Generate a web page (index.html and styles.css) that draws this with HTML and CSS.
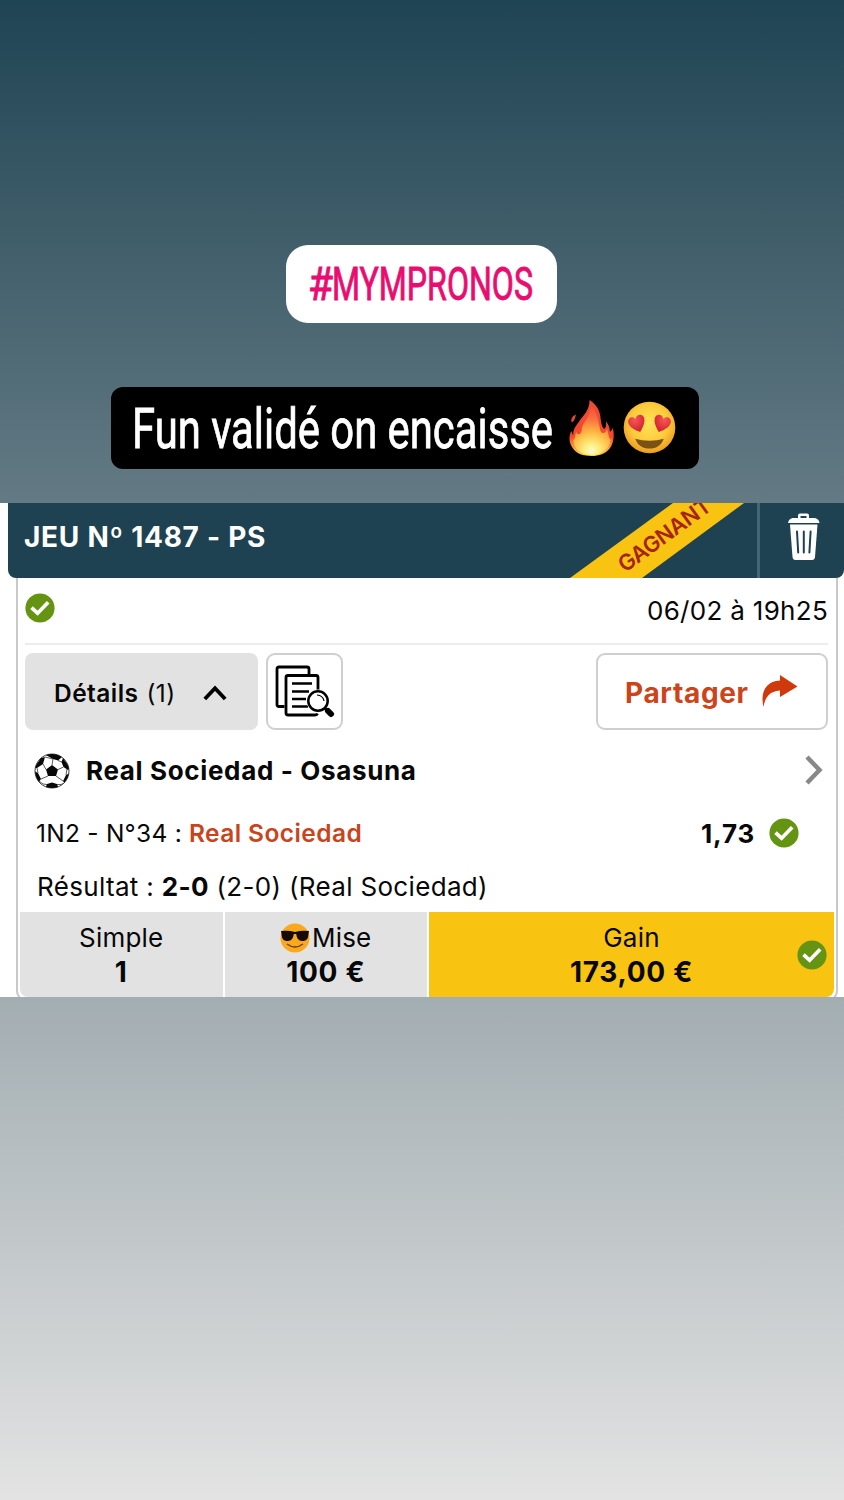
FILE: index.html
```html
<!DOCTYPE html>
<html lang="fr">
<head>
<meta charset="utf-8">
<title>Mympronos</title>
<link rel="stylesheet" href="styles.css">
</head>
<body>
<svg class="defs" aria-hidden="true">
  <defs>
    <symbol id="check" viewBox="0 0 30 30">
      <circle cx="15" cy="15" r="14.6" fill="#659413"/>
      <path d="M6.5 14.6 12.6 20.2 23.2 9.3" fill="none" stroke="#fff" stroke-width="3.7"/>
    </symbol>
  </defs>
</svg>
<main class="story">
  <div class="tag">
    <svg class="tag-text" viewBox="0 0 226 60"><text x="-1" y="46" textLength="25" lengthAdjust="spacingAndGlyphs">#</text><text x="23" y="46" textLength="201" lengthAdjust="spacingAndGlyphs">MYMPRONOS</text></svg>
  </div>
  <div class="caption">
    <svg class="caption-text" viewBox="0 0 420 76"><text x="-1" y="56" textLength="421" lengthAdjust="spacingAndGlyphs">Fun validé on encaisse</text></svg>
    <svg class="fire" viewBox="0 0 48 60">
      <defs>
        <radialGradient id="flame" gradientUnits="userSpaceOnUse" cx="24" cy="54" r="50">
          <stop offset="0" stop-color="#fffbd0"/><stop offset=".16" stop-color="#ffee7c"/>
          <stop offset=".4" stop-color="#ffb843"/><stop offset=".65" stop-color="#fa7440"/><stop offset="1" stop-color="#ee4336"/>
        </radialGradient>
        <linearGradient id="flameEdge" x1="0" y1="0" x2="0" y2="1"><stop offset="0" stop-color="#ef4b37"/><stop offset=".65" stop-color="#f3492b"/><stop offset="1" stop-color="#ffd94e"/></linearGradient>
      </defs>
      <path d="M22 1C27 4 32 10 33 17C34 23 34 28 37 31C40 29 39 25 39 23C42 27 43 30 43 34C45 33 45 32 46 30C48 37 47 46 43 51C38 57 32 59 24 59C16 59 8 57 4 50C0 43 1 38 3 33C4 35 4 36 5 37C5 30 9 27 12 22C16 16 22 12 22 1Z" fill="url(#flameEdge)"/>
      <path d="M23 7C30 13 31 22 33 32C34 36 38 37 40 31C42 37 42 42 44 42C43 52 34 58 24 58C14 58 6 53 5 43C7 42 7 39 8 34C10 39 14 36 14 31C15 23 23 20 23 7Z" fill="url(#flame)"/>
      <path d="M3 23C3 19 5 17 8 16C7 19 7 22 4 24Z" fill="#dd4a35"/>
    </svg>
    <svg class="love" viewBox="0 0 54 54">
      <defs>
        <radialGradient id="face" cx=".5" cy=".42" r=".56"><stop offset="0" stop-color="#ffe35a"/><stop offset=".65" stop-color="#fdcb3c"/><stop offset="1" stop-color="#eda023"/></radialGradient>
        <radialGradient id="heart" cx=".4" cy=".3" r=".75"><stop offset="0" stop-color="#f8565a"/><stop offset="1" stop-color="#cf2029"/></radialGradient>
      </defs>
      <circle cx="27" cy="27" r="26.3" fill="url(#face)"/>
      <path id="h" d="M17.5 31.5C11 29.5 6 26 5.3 21.7C4.7 17 9.500 14.500 12.800 18.400C13.800 12.800 20 12.500 21.500 17C22.700 21.500 20.500 26.500 17.500 31.500Z" fill="url(#heart)"/>
      <use href="#h" transform="matrix(-1 0 0 1 54 0)"/>
      <path d="M12.500 38.500C21 41 33 41 41.500 38.500C39.500 45 34 48.500 27 48.500S14.500 45 12.500 38.500Z" fill="#7c5213"/>
    </svg>
  </div>

  <section class="ticket">
    <header class="ticket-head">
      <h1 class="title">JEU Nº 1487 - PS</h1>
      <svg class="ribbon" viewBox="0 0 174 75">
        <path d="M0 75 103 0H174L72 75Z" fill="#f8c411"/>
        <text transform="translate(55 70) rotate(-36)" textLength="109" lengthAdjust="spacing">GAGNANT</text>
      </svg>
      <div class="trash-cell">
        <svg class="trash" viewBox="0 0 32 48">
          <path d="M10 5V2.500Q10 .5 12 .5H19Q21 .5 21 2.500V5H27Q31 6 31.500 10H0Q.5 6 4.500 5ZM12.500 5H18.500V3H12.500Z" fill="#fff" fill-rule="evenodd"/>
          <path d="M2 11.500H29.500L27 44Q26.700 47 24 47H7.500Q4.800 47 4.500 44Z" fill="#fff"/>
          <path d="M9 18.500 10.200 39.500M15.800 18.500V39.500M22.600 18.500 21.400 39.500" stroke="#1f4252" stroke-width="2" stroke-linecap="round"/>
        </svg>
      </div>
    </header>
    <div class="ticket-body">
      <div class="status">
        <svg class="check"><use href="#check"/></svg>
        <span class="date">06/02 à 19h25</span>
      </div>
      <div class="actions">
        <div class="details"><b class="details-label">Détails</b><span class="count">(1)</span>
          <svg class="chev-up" viewBox="0 0 24 16"><path d="M1.800 14 12 3.200 22.200 14" fill="none" stroke="#000" stroke-width="3.800"/></svg>
        </div>
        <div class="search">
          <svg class="docs" viewBox="0 0 60 54" fill="none" stroke="#000" stroke-width="2.800" stroke-linejoin="round">
            <path d="M9.500 41.500H4Q2 41.500 2 39.500V4Q2 2 4 2H32Q34 2 34 4V9"/>
            <path d="M43 25V12.500Q43 10.500 41 10.500H13Q11 10.500 11 12.500V48Q11 50 13 50H40Q42 50 42.500 48.500"/>
            <path d="M17 18.500H37M17 26.500H34M17 34H31M17 41.500H33" stroke-width="2.500"/>
            <circle cx="43" cy="36" r="11.500" fill="#fff" stroke="none"/>
            <circle cx="43" cy="36" r="9.700" stroke-width="2.500"/>
            <path d="M42 30Q48 30.500 49 36" stroke-width="1.200"/>
            <path d="M49.500 43 52 45.500" stroke-width="3"/>
            <path d="M53 46 56 49" stroke-width="6" stroke-linecap="round"/>
          </svg>
        </div>
        <div class="share"><span>Partager</span>
          <svg class="arrow" viewBox="0 0 36 33"><path d="M18 0 35.500 11.500 18 22V15.500C8 16 3 22 1.500 32C-2 17 4 6 18 5.500Z" fill="#d0390c"/></svg>
        </div>
      </div>
      <div class="match">
        <svg class="ball" viewBox="0 0 36 36">
          <defs><clipPath id="bc"><circle cx="18" cy="18" r="17"/></clipPath></defs>
          <circle cx="18" cy="18" r="17" fill="#fff" stroke="#111" stroke-width=".8"/>
          <g clip-path="url(#bc)">
            <path d="M18 12 24 16.500 22 23H14L12 16.500ZM10 1 18 0 27 2 28 4 24 7.500 19 6ZM29 5 36 15 34 17 29.500 14 27.500 9ZM7 5 11 4 9 11 3 15 0 15ZM0 18 4 20 7 26 5 29 0 27ZM36 20 32 22 29 28 31 31 36 27ZM13 31 18 29.500 23 31 25 36H11Z" fill="#080808"/>
            <path d="M18 12 19 6M24 16.500 29.500 14M22 23 29 28M14 23 7 26M12 16.500 9 11M5 28 9 31 13 31.500M31 30 27 31.500 23 31.500M11 4 19 6M24 7.500 28 9M3 15 4 20M33 16 32 22" stroke="#333" stroke-width=".8" fill="none"/>
          </g>
        </svg>
        <b class="teams">Real Sociedad - Osasuna</b>
        <svg class="chev-right" viewBox="0 0 18 30"><path d="M2 2 14.500 15 2 28" fill="none" stroke="#888" stroke-width="4.500"/></svg>
      </div>
      <div class="pick">
        <span class="market">1N2 - N°34 :</span><b class="choice">Real Sociedad</b>
        <b class="odds">1,73</b>
        <svg class="check"><use href="#check"/></svg>
      </div>
      <div class="result">Résultat : <b>2-0</b> (2-0) (Real Sociedad)</div>
      <div class="totals">
        <div class="total"><span class="label">Simple</span><b class="value">1</b></div>
        <div class="total"><span class="label">
          <svg class="cool" viewBox="0 0 30 30"><circle cx="15" cy="15" r="14.500" fill="#f9a91c"/><path d="M1 8Q8 7 15 9Q22 7 29 8L28.500 11C28 17 26 18 22 18Q17 18 16.200 11H13.800Q13 18 8 18C4 18 2 17 1.500 11Z" fill="#16090a"/><path d="M7 21Q15 27 23 21" stroke="#70400c" stroke-width="1.400" fill="none"/></svg>Mise</span><b class="value">100 €</b></div>
        <div class="total gain"><span class="label">Gain</span><b class="value">173,00 €</b>
          <svg class="check gain-check"><use href="#check"/></svg></div>
      </div>
    </div>
  </section>
</main>
</body>
</html>
```
FILE: styles.css
```css
* { box-sizing: border-box; }
body { margin: 0; }
svg { display: block; flex: none; }
.defs { position: absolute; width: 0; height: 0; }
.story {
  display: flex;
  flex-direction: column;
  width: 844px;
  height: 1500px;
  padding-top: 245px;
  overflow: hidden;
  font-family: Inter, "Liberation Sans", sans-serif;
  color: #080808;
  background: linear-gradient(#1f4454 0, #3f5d69 230px, #637a84 500px, #a3aeb2 1000px, #e3e3e3 1500px);
}
.tag {
  display: flex;
  width: 271px;
  height: 78px;
  margin-left: 286px;
  padding: 9px 0 0 23px;
  border-radius: 22px;
  background: #fff;
}
.tag-text { width: 226px; height: 60px; overflow: visible; }
.tag-text text { font: 400 45.500px Roboto, sans-serif; fill: #e90d70; stroke: #e90d70; stroke-width: .9px; }
.caption {
  display: flex;
  width: 588px;
  height: 82px;
  margin: 64px 0 34px 111px;
  padding: 5px 0 0 22px;
  border-radius: 12px;
  background: #000;
}
.caption-text { width: 420px; height: 76px; overflow: visible; }
.caption-text text { font: 400 56px Roboto, sans-serif; fill: #fff; stroke: #fff; stroke-width: .8px; }
.fire { width: 47px; height: 58px; margin: 7px 0 0 15px; }
.love { width: 53px; height: 53px; margin: 9px 0 0 8px; }

.ticket { height: 494px; background: #fff; overflow: hidden; }
.ticket-head {
  display: flex;
  height: 75px;
  margin-left: 8px;
  padding-left: 16px;
  border-radius: 0 0 8px 8px;
  background: #1f4252;
}
.title { width: 546px; margin: 0; font-size: 28px; line-height: 68px; letter-spacing: .74px; color: #fff; white-space: nowrap; }
.ribbon { width: 174px; height: 75px; overflow: hidden; }
.ribbon text { font: 600 22px Inter, sans-serif; fill: #a8230c; }
.trash-cell {
  display: flex;
  width: 87px;
  margin-left: 13px;
  padding: 10px 0 0 27.500px;
  border-left: 3px solid #466575;
}
.trash { width: 32px; height: 48px; }
.ticket-body {
  display: flex;
  flex-direction: column;
  width: 822px;
  height: 423px;
  margin-left: 16px;
  border: 2px solid #c9c9cb;
  border-top: 0;
  border-radius: 0 0 10px 10px;
}
.check { width: 30px; height: 30px; }
.status {
  display: flex;
  justify-content: space-between;
  height: 67px;
  margin: 0 8px 0 7px;
  padding-top: 15px;
  border-bottom: 2px solid #ececec;
}
.date { font-size: 26px; line-height: 36px; letter-spacing: .3px; }
.actions { display: flex; height: 77px; margin: 8px 8px 0 7px; }
.details {
  display: flex;
  align-items: center;
  width: 233px;
  padding: 2px 0 0 29px;
  border-radius: 8px;
  background: #e2e2e2;
  font-size: 24.500px;
  letter-spacing: .45px;
}
.details-label { font-weight: 600; }
.count { margin-left: 8px; }
.chev-up { width: 24px; height: 16px; margin: 0 0 0 27px; }
.search, .share { border: 2px solid #cfcfd1; border-radius: 9px; }
.search { width: 77px; margin-left: 8px; padding: 10px 0 0 6.500px; }
.docs { width: 60px; height: 54px; }
.share {
  display: flex;
  align-items: center;
  width: 232px;
  margin-left: auto;
  padding: 2px 0 0 27px;
  font-size: 28px;
  font-weight: 700;
  letter-spacing: .65px;
  color: #cd441b;
}
.arrow { width: 36px; height: 33px; margin: -2px 0 0 13px; }
.match { display: flex; align-items: center; height: 80px; padding: 0 13px 0 16px; }
.ball { width: 36px; height: 36px; margin-top: 2px; }
.teams { margin-left: 16px; font-size: 26px; letter-spacing: .65px; }
.chev-right { width: 18px; height: 30px; margin-left: auto; }
.pick { display: flex; align-items: center; height: 46px; padding: 0 37px 0 18px; font-size: 24.500px; letter-spacing: .25px; }
.choice { margin-left: 7px; font-weight: 600; letter-spacing: .42px; color: #c9441c; }
.odds { margin: 0 14px 0 auto; font-size: 26px; letter-spacing: .8px; }
.result { height: 56px; padding-left: 19px; font-size: 26px; line-height: 61px; letter-spacing: .33px; white-space: nowrap; }
.totals {
  display: grid;
  grid-template-columns: 202.500px 202.500px 405px;
  gap: 2px;
  height: 85px;
  margin: 0 2px;
  overflow: hidden;
  border-radius: 0 0 8px 8px;
}
.total {
  position: relative;
  display: flex;
  flex-direction: column;
  align-items: center;
  padding-top: 9px;
  background: #e2e2e2;
  font-size: 26px;
  line-height: 34px;
}
.label { display: flex; align-items: center; height: 34px; letter-spacing: .2px; }
.value { font-size: 28px; letter-spacing: .7px; }
.cool { width: 30px; height: 30px; margin: 0 2px 0 0; }
.gain { background: #f8c411; }
.gain-check { position: absolute; right: 7px; top: 28px; }
```
